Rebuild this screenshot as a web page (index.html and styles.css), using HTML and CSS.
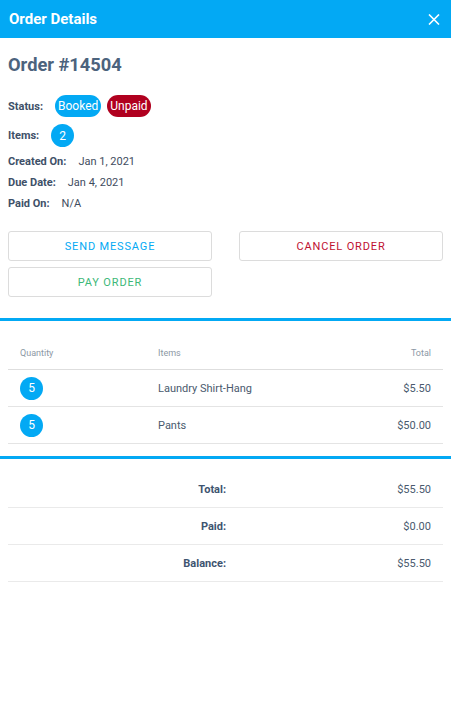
FILE: index.html
```html
<!DOCTYPE html>
<html>
<head>
<meta charset="utf-8">
<link rel="stylesheet" href="styles.css">
</head>
<body>
<header class="topbar">
  <span class="topbar-title">Order Details</span>
  <svg class="close" width="12" height="11" viewBox="0 0 12 11"><path d="M1 0.5 L11 10.5 M11 0.5 L1 10.5" stroke="#fff" stroke-width="1.6" fill="none"/></svg>
</header>
<section class="info">
  <h2 class="order-title">Order #14504</h2>
  <div class="row row-status"><span class="label">Status:</span><span class="pill pill-blue">Booked</span><span class="pill pill-red">Unpaid</span></div>
  <div class="row row-items"><span class="label">Items:</span><span class="circle">2</span></div>
  <div class="row row-text"><span class="label">Created On:</span><span class="value">Jan 1, 2021</span></div>
  <div class="row row-text"><span class="label">Due Date:</span><span class="value">Jan 4, 2021</span></div>
  <div class="row row-text"><span class="label">Paid On:</span><span class="value">N/A</span></div>
  <div class="actions">
    <button class="btn btn-blue">SEND MESSAGE</button>
    <button class="btn btn-red">CANCEL ORDER</button>
    <button class="btn btn-green">PAY ORDER</button>
  </div>
</section>
<div class="divider"></div>
<section class="items">
  <div class="items-head">
    <span>Quantity</span><span>Items</span><span class="right">Total</span>
  </div>
  <div class="items-row">
    <span><span class="circle">5</span></span><span>Laundry Shirt-Hang</span><span class="right">$5.50</span>
  </div>
  <div class="items-row">
    <span><span class="circle">5</span></span><span>Pants</span><span class="right">$50.00</span>
  </div>
</section>
<div class="divider"></div>
<section class="totals">
  <div class="totals-row"><span class="tlabel">Total:</span><span class="tvalue">$55.50</span></div>
  <div class="totals-row"><span class="tlabel">Paid:</span><span class="tvalue">$0.00</span></div>
  <div class="totals-row"><span class="tlabel">Balance:</span><span class="tvalue">$55.50</span></div>
</section>
</body>
</html>
```
FILE: styles.css
```css
* { box-sizing: border-box; }
body {
  margin: 0;
  font-family: Roboto, "Liberation Sans", sans-serif;
  background: #fff;
  color: #4a5568;
}
.topbar {
  height: 38px;
  background: #03a9f4;
  display: flex;
  align-items: center;
  justify-content: space-between;
  padding: 0 11px 0 9px;
}
.topbar-title {
  color: #fff;
  font-weight: 700;
  font-size: 15px;
}
.close { display: block; }
.info { padding: 0 8px; }
.order-title {
  margin: 16px 0 0 0;
  font-size: 18.3px;
  line-height: 22px;
  font-weight: 700;
  color: #4c637d;
}
.row {
  display: flex;
  align-items: center;
}
.label {
  font-size: 11px;
  font-weight: 700;
  color: #3e5068;
  margin-right: 12px;
}
.value {
  font-size: 11px;
  color: #3f4c5e;
}
.row-status { margin-top: 19px; height: 22px; }
.row-items { margin-top: 7px; height: 23px; }
.row-text { height: 21px; }
.row-items + .row-text { margin-top: 4px; }
.pill {
  display: inline-flex;
  align-items: center;
  height: 22px;
  padding: 0 3px;
  border-radius: 11px;
  color: #fff;
  font-size: 12px;
  margin-right: 6px;
}
.pill-blue { background: #03a9f4; }
.pill-red { background: #b0001f; }
.circle {
  display: inline-flex;
  align-items: center;
  justify-content: center;
  width: 23px;
  height: 23px;
  border-radius: 50%;
  background: #03a9f4;
  color: #fff;
  font-size: 12px;
}
.actions {
  margin-top: 17px;
  display: grid;
  grid-template-columns: 204px 204px;
  justify-content: space-between;
  row-gap: 6px;
}
.btn {
  height: 30px;
  background: #fff;
  border: 1px solid #dcdcdc;
  border-radius: 3px;
  font-family: Roboto, "Liberation Sans", sans-serif;
  font-size: 11px;
  letter-spacing: 0.85px;
  padding: 0;
}
.btn-blue { color: #03a9f4; }
.btn-red { color: #c01030; }
.btn-green { color: #3cb878; }
.divider {
  height: 3px;
  background: #03a9f4;
  margin-top: 21px;
}
.items {
  padding: 16px 8px 0 8px;
}
.items-head, .items-row {
  display: grid;
  grid-template-columns: 138px 1fr auto;
  align-items: center;
  padding: 0 12px;
}
.items-head {
  height: 33px;
  padding-bottom: 1px;
  font-size: 9px;
  color: #8c98a5;
  border-bottom: 1px solid #dedede;
}
.items-row {
  height: 37px;
  font-size: 11px;
  color: #4a5a6e;
  border-bottom: 1px solid #e4e4e4;
}
.items-row .circle { display: flex; }
.right { text-align: right; }
.items + .divider { margin-top: 12px; }
.totals {
  padding: 12px 8px 0 8px;
}
.totals-row {
  display: grid;
  grid-template-columns: 230px 1fr;
  align-items: center;
  height: 37px;
  border-bottom: 1px solid #eaeaea;
}
.tlabel {
  text-align: right;
  padding-right: 12px;
  font-size: 11px;
  font-weight: 700;
  color: #3e5470;
}
.tvalue {
  text-align: right;
  padding-right: 12px;
  font-size: 11px;
  color: #4a5a6e;
}
```
